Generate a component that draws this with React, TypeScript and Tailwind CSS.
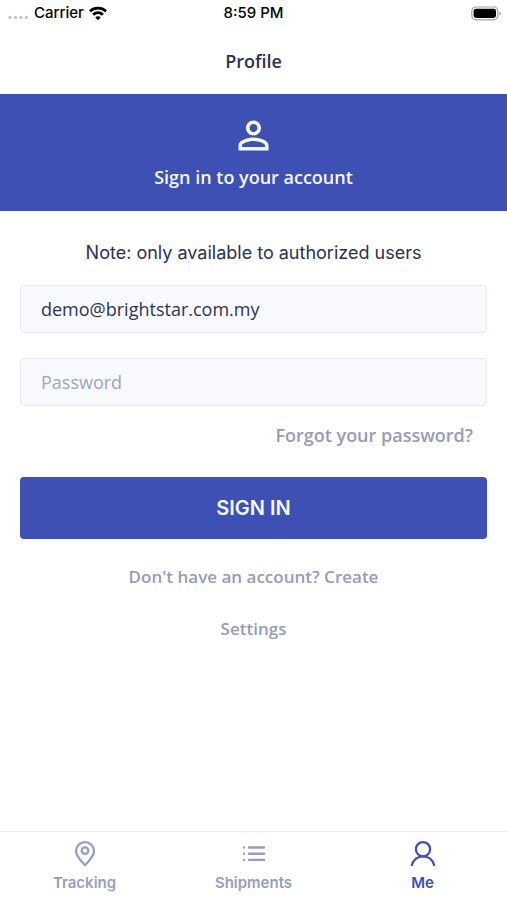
import type { ReactNode } from "react";

function StatusBar() {
  return (
    <div className="grid h-[27px] grid-cols-3 items-center px-[6px] font-['Inter',sans-serif] text-[15px] font-medium text-black">
      <div className="flex items-center gap-[5px]">
        <svg width="23" height="12" viewBox="0 0 23 12" fill="#c9c9c9" aria-hidden="true">
          <circle cx="4" cy="9.500" r="1.8" />
          <circle cx="9.500" cy="9.500" r="1.8" />
          <circle cx="15" cy="9.500" r="1.8" />
          <circle cx="20.500" cy="9.500" r="1.8" />
        </svg>
        <span>Carrier</span>
        <svg width="18" height="15" viewBox="0.8 1 18.4 15" fill="none" stroke="#000" strokeWidth="2.9" aria-hidden="true">
          <path d="M1.700 6.200C6.300 1.900 13.700 1.900 18.300 6.200" />
          <path d="M5 9.700C7.800 7 12.200 7 15 9.700" />
          <path d="M10 15.300 L7.200 12.500 C8.700 11 11.300 11 12.800 12.500 Z" fill="#000" stroke="none" />
        </svg>
      </div>
      <span className="text-center">8:59 PM</span>
      <svg className="justify-self-end" width="30" height="15" viewBox="0 0 30 15" aria-hidden="true">
        <rect x="0.8" y="1" width="26" height="12.800" rx="4" fill="none" stroke="#a3a3a3" strokeWidth="1.2" />
        <rect x="2.6" y="2.800" width="22.4" height="9.200" rx="2.4" fill="#000" />
        <path d="M28.3 5.300 Q30 6.100 30 7.400 Q30 8.700 28.3 9.500 Z" fill="#a3a3a3" />
      </svg>
    </div>
  );
}

function TabItem({ label, active, children }: { label: string; active?: boolean; children: ReactNode }) {
  return (
    <a
      href="#"
      aria-current={active ? "page" : undefined}
      className={`flex flex-col items-center gap-1 pt-2 ${active ? "text-[#3e50b4]" : "text-[#969fb9]"}`}
    >
      {children}
      <span className="font-['Inter',sans-serif] text-[15px] leading-[22px] font-semibold">{label}</span>
    </a>
  );
}

const field =
  "block h-12 w-full rounded border border-[#e8ebf2] bg-[#f7f9fd] px-5 text-lg text-[#303450] outline-none placeholder:text-[#9ea5bb] placeholder:opacity-100";

export default function App() {
  return (
    <div className="flex min-h-screen flex-col bg-white font-['Open_Sans',sans-serif] text-[#2c3150]">
      <StatusBar />
      <header className="flex h-[67px] items-center justify-center">
        <h1 className="text-lg font-semibold">Profile</h1>
      </header>
      <section className="flex h-[117px] flex-col items-center gap-[7px] bg-[#3e50b4] pt-[19px] text-[#f5f8ff]">
        <svg width="45" height="45" viewBox="0 0 24 24" fill="currentColor" aria-hidden="true">
          <path d="M12 5.9c1.16 0 2.1.94 2.1 2.1s-.94 2.1-2.1 2.1S9.9 9.16 9.9 8s.94-2.1 2.1-2.1m0 9c2.97 0 6.1 1.46 6.1 2.1v1.1H5.9V17c0-.64 3.13-2.1 6.1-2.1M12 4C9.79 4 8 5.79 8 8s1.79 4 4 4 4-1.79 4-4-1.79-4-4-4zm0 9c-2.67 0-8 1.34-8 4v3h16v-3c0-2.66-5.33-4-8-4z" />
        </svg>
        <h2 className="text-lg leading-6 font-semibold">Sign in to your account</h2>
      </section>
      <main className="flex flex-1 flex-col px-5 pt-7">
        <p className="text-center font-['Inter',sans-serif] text-lg leading-7">
          Note: only available to authorized users
        </p>
        <form className="mt-[18px] flex flex-col" onSubmit={(e) => e.preventDefault()}>
          <input type="email" aria-label="Email" defaultValue="demo@brightstar.com.my" className={field} />
          <div className="mt-[25px]">
            <input type="password" aria-label="Password" placeholder="Password" className={field} />
          </div>
          <a href="#" className="mt-[17px] self-end pr-[14px] text-lg leading-6 font-semibold text-[#969cb6]">
            Forgot your password?
          </a>
          <button
            type="submit"
            className="mt-[30px] h-[62px] rounded bg-[#3e50b4] font-['Inter',sans-serif] text-xl font-semibold text-[#f5f8ff]"
          >
            SIGN IN
          </button>
        </form>
        <div className="mt-[26px] flex flex-col items-center gap-7 text-[17px] leading-6 font-semibold text-[#969cb6]">
          <a href="#">Don't have an account? Create</a>
          <a href="#">Settings</a>
        </div>
      </main>
      <nav className="grid h-[69px] grid-cols-3 border-t border-[#ebedf1]">
        <TabItem label="Tracking">
          <svg width="28" height="28" viewBox="0 0 28 28" fill="none" stroke="currentColor" strokeWidth="2.300" strokeLinejoin="round" aria-hidden="true">
            <path d="M14 25.2C11 22 5 16.5 5 11C5 6 9 2.2 14 2.2S23 6 23 11C23 16.500 17 22 14 25.200Z" />
            <circle cx="14" cy="10.700" r="3.300" />
          </svg>
        </TabItem>
        <TabItem label="Shipments">
          <svg width="28" height="28" viewBox="0 0 28 28" fill="none" stroke="currentColor" strokeWidth="2.400" strokeLinecap="round" aria-hidden="true">
            <path d="M9 7.500H24M9 13.700H24M9 19.900H24" />
            <path d="M4 7.500H4.010M4 13.700H4.010M4 19.900H4.010" />
          </svg>
        </TabItem>
        <TabItem label="Me" active>
          <svg width="28" height="28" viewBox="0 0 28 28" fill="none" stroke="currentColor" strokeWidth="2.300" strokeLinecap="round" aria-hidden="true">
            <circle cx="14" cy="9.200" r="7.100" />
            <path d="M2.900 25C4.300 19.800 8.600 16.300 14 16.300S23.700 19.800 25.100 25" />
          </svg>
        </TabItem>
      </nav>
    </div>
  );
}
